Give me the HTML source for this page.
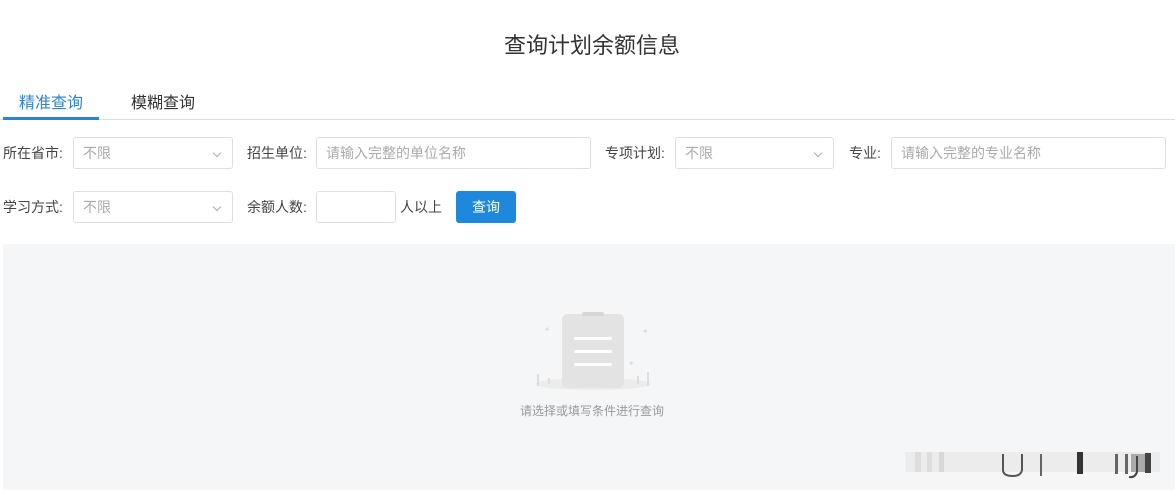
<!DOCTYPE html>
<html><head><meta charset="utf-8"><style>
*{box-sizing:border-box;margin:0;padding:0}
body{width:1175px;height:495px;background:#fff;font-family:"Liberation Sans","Noto Sans CJK SC",sans-serif;color:#333;position:relative;overflow:hidden}
.a{position:absolute;white-space:nowrap}
.lab{font-size:14px;color:#444;line-height:32px}
.box{border:1px solid #dcdfe6;border-radius:3px;height:32px;font-size:14px;color:#aaa;line-height:30px;padding-left:9px}
.car{position:absolute;right:12px;top:12px;width:6px;height:6px;border-right:1px solid #aaa;border-bottom:1px solid #aaa;transform:rotate(45deg)}
</style></head><body>
<div class="a" style="left:504px;top:28px;font-size:22px;color:#333">查询计划余额信息</div>
<div class="a" style="left:19px;top:89px;font-size:16px;color:#2d84cc">精准查询</div>
<div class="a" style="left:131px;top:89px;font-size:16px;color:#333">模糊查询</div>
<div class="a" style="left:0;top:119px;width:1175px;height:1px;background:#ddd"></div>
<div class="a" style="left:3px;top:117px;width:96px;height:3px;background:#2d84cc"></div>

<div class="a lab" style="left:3px;top:137px">所在省市:</div>
<div class="a box" style="left:73px;top:137px;width:160px">不限<span class="car"></span></div>
<div class="a lab" style="left:247px;top:137px">招生单位:</div>
<div class="a box" style="left:316px;top:137px;width:275px">请输入完整的单位名称</div>
<div class="a lab" style="left:605px;top:137px">专项计划:</div>
<div class="a box" style="left:675px;top:137px;width:159px">不限<span class="car"></span></div>
<div class="a lab" style="left:849px;top:137px">专业:</div>
<div class="a box" style="left:891px;top:137px;width:275px">请输入完整的专业名称</div>

<div class="a lab" style="left:3px;top:191px">学习方式:</div>
<div class="a box" style="left:73px;top:191px;width:160px">不限<span class="car"></span></div>
<div class="a lab" style="left:247px;top:191px">余额人数:</div>
<div class="a box" style="left:316px;top:191px;width:80px"></div>
<div class="a lab" style="left:400px;top:191px">人以上</div>
<div class="a" style="left:456px;top:191px;width:60px;height:32px;background:#1e88dd;border-radius:3px;color:#fff;font-size:14px;line-height:32px;text-align:center">查询</div>

<div class="a" style="left:3px;top:244px;width:1172px;height:246px;background:#f5f6f8"></div>
<svg class="a" style="left:530px;top:310px" width="126" height="84" viewBox="0 0 126 84">
<ellipse cx="63" cy="74" rx="58" ry="6" fill="#ececec"/>
<rect x="32" y="4" width="62" height="74" rx="5" fill="#e3e3e3"/>
<rect x="52" y="2" width="22" height="4" rx="2" fill="#d6d6d6"/>
<rect x="44" y="27" width="38" height="3" rx="1.5" fill="#fff"/>
<rect x="44" y="40" width="38" height="3" rx="1.5" fill="#fff"/>
<rect x="44" y="53" width="38" height="3" rx="1.5" fill="#fff"/>
<path d="M8 76 V64 M19 74 V68 M118 76 V62 M108 74 V66" stroke="#ddd" stroke-width="2"/>
<text x="14" y="22" font-size="8" fill="#ddd">✦</text><text x="112" y="24" font-size="8" fill="#ddd">✦</text><text x="98" y="56" font-size="8" fill="#ddd">✦</text>
</svg>
<div class="a" style="left:520px;top:402px;font-size:12px;color:#999">请选择或填写条件进行查询</div>
<svg class="a" style="left:905px;top:448px" width="255" height="32">
<rect x="0" y="4" width="255" height="20" fill="#ececec"/>
<rect x="10" y="4" width="6" height="20" fill="#ddd"/><rect x="22" y="4" width="5" height="20" fill="#ddd"/><rect x="34" y="4" width="5" height="20" fill="#d8d8d8"/>
<path d="M98 6 V22 Q98 28 108 28 Q116 28 117 22 V6" stroke="#555" stroke-width="2" fill="none"/>
<rect x="135" y="6" width="2" height="22" fill="#666"/>
<rect x="172" y="4" width="6" height="22" fill="#333"/>
<rect x="210" y="6" width="3" height="20" fill="#666"/><rect x="220" y="6" width="3" height="20" fill="#666"/>
<rect x="226" y="6" width="14" height="18" fill="#aaa"/><rect x="240" y="5" width="6" height="20" fill="#444"/>
<path d="M232 8 V24 Q230 30 224 29" stroke="#444" stroke-width="2" fill="none"/>
</svg>
</body></html>
